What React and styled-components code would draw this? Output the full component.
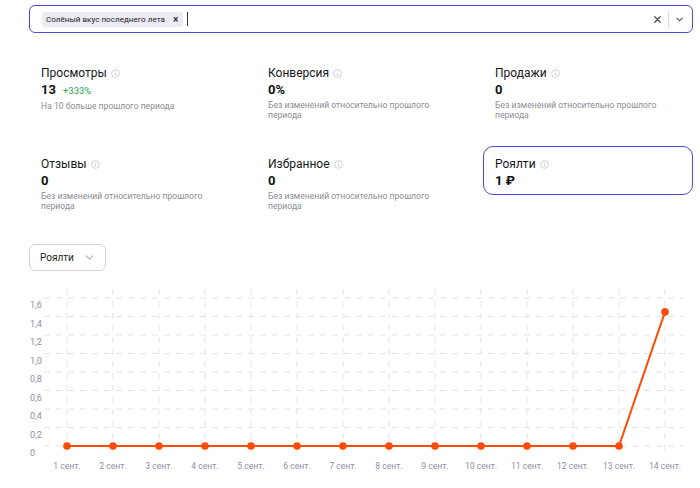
import React from 'react';
import styled, { createGlobalStyle } from 'styled-components';

const Global = createGlobalStyle`
    body {
        margin: 0;
        background: #fff;
        font-family: Roboto, "Liberation Sans", sans-serif;
        color: #1b1b1f;
    }
`;

const Page = styled.div`
    padding: 5px 7px 0 29px;
    width: 700px;
    box-sizing: border-box;
`;

const Search = styled.div`
    display: flex;
    align-items: center;
    height: 28px;
    box-sizing: border-box;
    border: 1px solid #4d4bd1;
    border-radius: 6px;
    padding: 0 8px 0 12px;
`;

const Tags = styled.div`
    flex: 1;
    display: flex;
    align-items: center;
    gap: 4px;
`;

const Tag = styled.div`
    display: flex;
    align-items: center;
    gap: 8px;
    height: 15px;
    padding: 0 5px 0 4px;
    background: #ebebf3;
    border-radius: 3px;
    font-size: 8.1px;
    color: #222;
`;

const TagClose = styled.span`
    font-size: 10px;
    font-weight: 700;
    color: #333;
`;

const Caret = styled.div`
    width: 1px;
    height: 14px;
    background: #333;
`;

const Controls = styled.div`
    display: flex;
    align-items: center;
    gap: 6px;
    color: #555;
`;

const Divider = styled.div`
    width: 1px;
    height: 17px;
    background: #dcdce2;
`;

const Stats = styled.div`
    display: grid;
    grid-template-columns: repeat(3, 210px);
    column-gap: 17px;
    row-gap: 20px;
    align-items: start;
    margin-top: 22px;
`;

const Card = styled.div`
    padding: 10px 11px 5px;
    border: 1px solid ${p => (p.active ? '#4d4bd1' : 'transparent')};
    border-radius: 10px;
`;

const Title = styled.div`
    display: flex;
    align-items: center;
    gap: 4px;
    font-size: 12px;
    line-height: 14px;
    color: #17171b;
`;

const Value = styled.div`
    display: flex;
    align-items: baseline;
    gap: 7px;
    margin-top: 2px;
    font-size: 13px;
    line-height: 16px;
    font-weight: 700;
    color: #111;
`;

const Delta = styled.span`
    font-size: 9.5px;
    font-weight: 400;
    color: #2aa64a;
`;

const Desc = styled.div`
    margin-top: 2px;
    font-size: 8.6px;
    line-height: 10px;
    color: #8d8d96;
    max-width: 165px;
`;

const SelectBox = styled.div`
    display: flex;
    align-items: center;
    justify-content: space-between;
    width: 77px;
    height: 27px;
    box-sizing: border-box;
    margin-top: 27px;
    padding: 0 10px 0 10px;
    border: 1px solid #d3d3de;
    border-radius: 6px;
    font-size: 10px;
    color: #222;
`;

const ChartWrap = styled.div`
    margin: 10px 0 0 -29px;
`;

const InfoIcon = () => (
    <svg width="9" height="9" viewBox="0 0 10 10">
        <circle cx="5" cy="5" r="4.3" fill="none" stroke="#c6c6cf" strokeWidth="0.9" />
        <rect x="4.55" y="4.2" width="0.9" height="3.2" fill="#c6c6cf" />
        <circle cx="5" cy="2.9" r="0.55" fill="#c6c6cf" />
    </svg>
);

const Chevron = ({ color = '#555', size = 9 }) => (
    <svg width={size} height={size} viewBox="0 0 10 10">
        <path d="M2 3.5 L5 6.5 L8 3.5" fill="none" stroke={color} strokeWidth="1.2" strokeLinecap="round" />
    </svg>
);

const Cross = () => (
    <svg width="9" height="9" viewBox="0 0 10 10">
        <path d="M2 2 L8 8 M8 2 L2 8" stroke="#555" strokeWidth="1.5" strokeLinecap="round" />
    </svg>
);

const stats = [
    { title: 'Просмотры', value: '13', delta: '+333%', desc: 'На 10 больше прошлого периода' },
    { title: 'Конверсия', value: '0%', desc: 'Без изменений относительно прошлого периода' },
    { title: 'Продажи', value: '0', desc: 'Без изменений относительно прошлого периода' },
    { title: 'Отзывы', value: '0', desc: 'Без изменений относительно прошлого периода' },
    { title: 'Избранное', value: '0', desc: 'Без изменений относительно прошлого периода' },
    { title: 'Роялти', value: '1 ₽', active: true },
];

const values = [0, 0, 0, 0, 0, 0, 0, 0, 0, 0, 0, 0, 0, 1.45];

const Chart = () => {
    const x0 = 67;
    const step = 46;
    const zero = 165;
    const unit = 92.5;
    const ticks = [0, 0.2, 0.4, 0.6, 0.8, 1.0, 1.2, 1.4, 1.6];
    const pts = values.map((v, i) => [x0 + i * step, zero - v * unit]);
    return (
        <svg width="700" height="198" viewBox="0 0 700 198">
            {ticks.map(t => {
                const y = zero - t * unit;
                return (
                    <g key={t}>
                        <line x1="44" x2="684" y1={y} y2={y} stroke="#e4e4e8" strokeDasharray="6 6" />
                        <text x="30" y={y + 10} fontSize="9" fill="#8c8fa6" fontFamily="Roboto, sans-serif">
                            {t === 0 ? '0' : t.toFixed(1).replace('.', ',')}
                        </text>
                    </g>
                );
            })}
            {pts.map(([x], i) => (
                <g key={i}>
                    <line x1={x} x2={x} y1="8" y2="177" stroke="#e4e4e8" strokeDasharray="6 6" />
                    <text x={x} y="188" fontSize="8.6" fill="#8c8fa6" textAnchor="middle" fontFamily="Roboto, sans-serif">
                        {i + 1} сент.
                    </text>
                </g>
            ))}
            <polyline points={pts.map(p => p.join(',')).join(' ')} fill="none" stroke="#ff4b05" strokeWidth="2" />
            {pts.map(([x, y], i) => (
                <circle key={i} cx={x} cy={y} r="3.8" fill="#ff4b05" />
            ))}
        </svg>
    );
};

const App = () => (
    <Page>
        <Global />
        <Search>
            <Tags>
                <Tag>
                    Солёный вкус последнего лета
                    <TagClose>×</TagClose>
                </Tag>
                <Caret />
            </Tags>
            <Controls>
                <Cross />
                <Divider />
                <Chevron />
            </Controls>
        </Search>
        <Stats>
            {stats.map(s => (
                <Card key={s.title} active={s.active}>
                    <Title>
                        {s.title}
                        <InfoIcon />
                    </Title>
                    <Value>
                        {s.value}
                        {s.delta && <Delta>{s.delta}</Delta>}
                    </Value>
                    {s.desc && <Desc>{s.desc}</Desc>}
                </Card>
            ))}
        </Stats>
        <SelectBox>
            Роялти
            <Chevron color="#b8b8c4" size={11} />
        </SelectBox>
        <ChartWrap>
            <Chart />
        </ChartWrap>
    </Page>
);

export default App;
